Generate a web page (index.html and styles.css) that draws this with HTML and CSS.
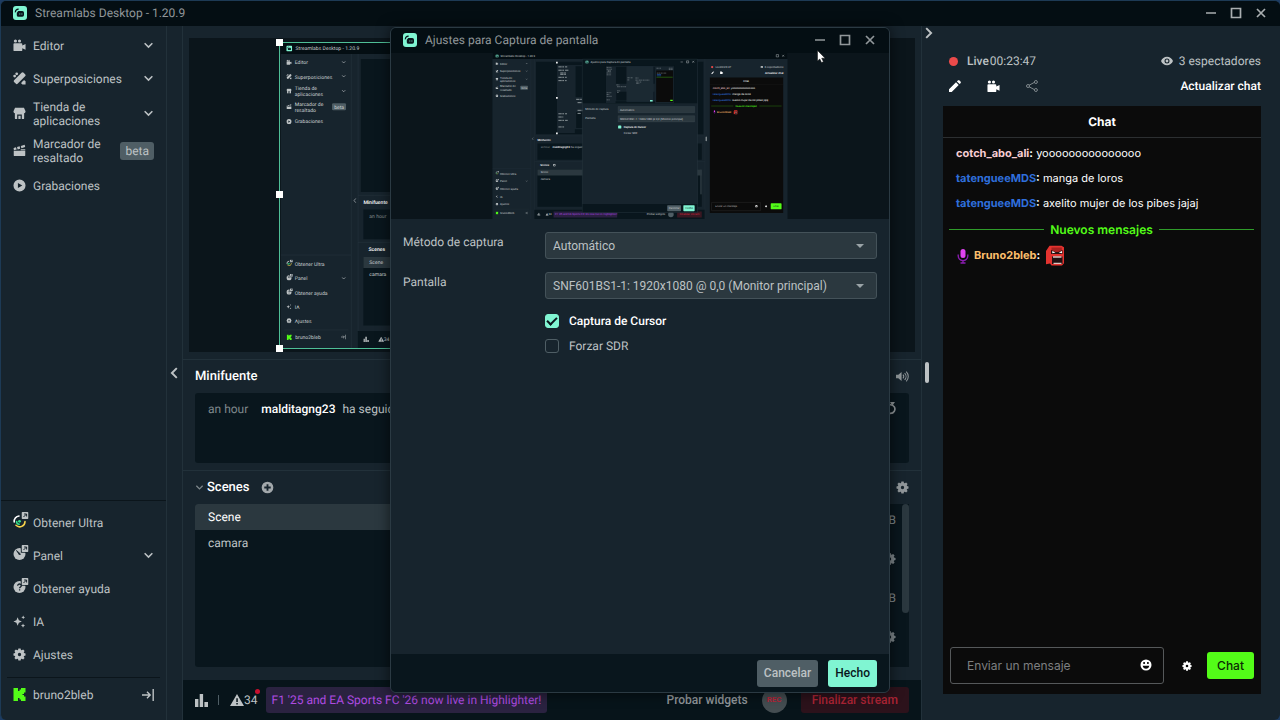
FILE: index.html
```html
<!DOCTYPE html>
<html lang="es">
<head>
    <meta charset="UTF-8">
    <meta name="viewport" content="width=device-width, initial-scale=1.0">
    <title>Streamlabs Desktop</title>
    <link rel="stylesheet" href="styles.css">
</head>
<body>
    <!-- icons -->
    <svg class="sprite" aria-hidden="true">
        <symbol id="logo" viewBox="0 0 14 14">
            <rect width="14" height="14" rx="3" fill="#80f5d2"/>
            <path d="M2.300 6C2.500 4.200 3.600 3.200 5.300 3.100" fill="none" stroke="#09161d" stroke-width="1.100" stroke-linecap="round"/>
            <path d="M3.800 6.700 5.300 5h4a1.700 1.700 0 0 1 1.700 1.700v2.400a1.700 1.700 0 0 1-1.700 1.700H5.400a1.600 1.600 0 0 1-1.600-1.600z" fill="#09161d"/>
            <path d="M6.800 7.500v1M8.900 7.500v1" stroke="#80f5d2" stroke-width=".9"/>
        </symbol>
        <symbol id="camera" viewBox="0 0 14 14">
            <circle cx="2.600" cy="2.200" r="1.700"/><circle cx="7" cy="2.200" r="1.700"/>
            <path d="M1.500 4.500h7.500a1 1 0 0 1 1 1v1.600l3.500-1.600v6L10 10v2a1 1 0 0 1-1 1H1.500a1 1 0 0 1-1-1V5.500a1 1 0 0 1 1-1z"/>
        </symbol>
        <symbol id="overlays" viewBox="0 0 14 14">
            <path d="M9.200.9a1.600 1.600 0 0 1 2.300 0l1.500 1.500a1.600 1.600 0 0 1 0 2.300L5.200 12.500a1.600 1.600 0 0 1-2.300 0l-1.500-1.500a1.600 1.600 0 0 1 0-2.300z"/>
            <path d="M9.800 10.600 12 8.600l1.500 1.500v3.400h-3.300L8.700 12z"/>
            <circle cx="4" cy="2" r="1.500"/><circle cx="1.800" cy="4.400" r="1.500"/>
        </symbol>
        <symbol id="store" viewBox="0 0 14 14">
            <path d="M2.200.8h9.600l1.700 3.700c0 1.300-.7 2-1.500 2.200V12a1 1 0 0 1-1 1H9.500V8.200h-5V13H3a1 1 0 0 1-1-1V6.700C1.200 6.500.5 5.800.5 4.500z"/>
            <path d="M5.800 9.500h2.400V13H5.800z"/>
        </symbol>
        <symbol id="clapper" viewBox="0 0 14 14">
            <path d="M.8 7.300h12.400V12a1 1 0 0 1-1 1H1.800a1 1 0 0 1-1-1zM.6 4.200l2.600-.7.800 2.500-3 .7zM4.300 3.200l2.900-.8.500 2.600-2.700.8zM8.400 2.100l4.200-1.200.5 2.400-4.100 1.400zM8.300 5.600h4.900v1H8.300z"/>
        </symbol>
        <symbol id="play" viewBox="0 0 14 14">
            <path fill-rule="evenodd" d="M7 .5a6.500 6.500 0 1 0 0 13 6.500 6.500 0 0 0 0-13zM5.300 4.200 10 7l-4.700 2.800z"/>
        </symbol>
        <symbol id="chevron" viewBox="0 0 10 10">
            <path d="M1.500 3 5 6.500 8.500 3" fill="none" stroke="currentColor" stroke-width="1.400"/>
        </symbol>
        <symbol id="external" viewBox="0 0 7 7">
            <rect width="7" height="7" rx="1" fill="#bdc2c4"/>
            <path d="M2 5 4.800 2.200M2.600 2h2.500v2.500" fill="none" stroke="#17242d"/>
        </symbol>
        <symbol id="ultra" viewBox="0 0 16 16">
            <g fill="none" stroke-width="1.600" stroke-linecap="round">
                <path d="M1.200 10A5.300 5.300 0 0 1 6 4" stroke="#fff"/>
                <path d="M3.600 9.500a2.800 2.800 0 0 0 2.600 2.800" stroke="#36e08a"/>
                <path d="M3 13.300a5.300 5.300 0 0 0 9-3.800" stroke="#f5d34a"/>
            </g>
            <circle cx="6.500" cy="9.300" r="1.400" fill="#36e08a"/>
            <use href="#external" x="8.500" y="0" width="7" height="7"/>
        </symbol>
        <symbol id="gauge" viewBox="0 0 16 16">
            <circle cx="6.500" cy="9" r="6"/>
            <path d="m3.500 5.500 4 3.500-1 1z" fill="#17242d" stroke="#17242d" stroke-width=".8"/>
            <path d="M7.800 0H16v7.700H7.800z" fill="#17242d"/>
            <use href="#external" x="8.500" y="0" width="7" height="7"/>
        </symbol>
        <symbol id="help" viewBox="0 0 16 16">
            <circle cx="6.500" cy="9" r="6"/>
            <path d="M4.700 7.700c0-2.300 3.700-2.200 3.600 0 0 1.200-1.700 1.300-1.700 2.500M6.600 11.300v1.300" fill="none" stroke="#17242d" stroke-width="1.300"/>
            <path d="M7.800 0H16v7.700H7.800z" fill="#17242d"/>
            <use href="#external" x="8.500" y="0" width="7" height="7"/>
        </symbol>
        <symbol id="sparkle" viewBox="0 0 14 14">
            <path d="m5 2.500 1.300 3.200L9.500 7 6.300 8.300 5 11.500 3.700 8.300.5 7l3.200-1.300zM11 .5l.6 1.400 1.400.6-1.400.6-.6 1.400-.6-1.400L9 2.500l1.400-.6zM10.800 9.200l.7 1.600 1.600.7-1.600.7-.7 1.600-.7-1.600-1.600-.7 1.600-.7z"/>
        </symbol>
        <symbol id="gear" viewBox="0 0 14 14">
            <path fill-rule="evenodd" d="M5.800.5h2.400l.4 1.700.8.300 1.500-.9 1.600 1.600-.9 1.500.3.800 1.600.4v2.300l-1.600.4-.3.800.9 1.500-1.600 1.600-1.500-.9-.8.300-.4 1.600H5.800l-.4-1.600-.8-.3-1.500.9-1.600-1.600.9-1.500-.3-.8L.5 8.200V5.900l1.600-.4.300-.8-.9-1.500 1.600-1.600 1.500.9.800-.3zM7 5.200a1.800 1.800 0 1 0 0 3.600 1.800 1.800 0 0 0 0-3.600z"/>
        </symbol>
        <symbol id="kick" viewBox="0 0 12 13">
            <path fill="#53fc18" d="M0 0h4.500v3H6V1.500h1.500V0H12v4.500h-1.500V6H9v1h1.500v1.500H12V13H7.500v-1.500H6V10H4.500v3H0z"/>
        </symbol>
        <symbol id="logout" viewBox="0 0 12 12">
            <path d="M0 6h8M5 2.800 8.200 6 5 9.200M11.200 0v12" fill="none" stroke="currentColor" stroke-width="1.400"/>
        </symbol>
        <symbol id="minimize" viewBox="0 0 12 12"><path d="M1 6h10" stroke="currentColor" stroke-width="1.500"/></symbol>
        <symbol id="maximize" viewBox="0 0 12 12"><path d="M1.500 1.500h9v9h-9z" fill="none" stroke="currentColor" stroke-width="1.700"/></symbol>
        <symbol id="close" viewBox="0 0 12 12"><path d="m2 2 8 8m0-8-8 8" stroke="currentColor" stroke-width="1.700"/></symbol>
        <symbol id="plus" viewBox="0 0 14 14">
            <path fill-rule="evenodd" d="M7 .7a6.300 6.300 0 1 0 0 12.600A6.300 6.300 0 0 0 7 .7zM6 3.500h2v2.500h2.500v2H8v2.500H6V8H3.500V6H6z"/>
        </symbol>
        <symbol id="volume" viewBox="0 0 14 12">
            <path d="M0 4h2.500L6 1.200v9.600L2.500 8H0z"/>
            <path d="M7.500 4a3 3 0 0 1 0 4M9.300 2.300a5.300 5.300 0 0 1 0 7.400M11 .7a7.500 7.500 0 0 1 0 10.600" fill="none" stroke="currentColor" stroke-width="1.100"/>
        </symbol>
        <symbol id="undo" viewBox="0 0 12 12">
            <path d="M3 2.500h4a4 4 0 1 1-3.500 6" fill="none" stroke="currentColor" stroke-width="1.500"/>
            <path d="M6.500 0H11L8.500 3.800z"/>
        </symbol>
        <symbol id="bars" viewBox="0 0 13 13"><path d="M0 5h3.400v8H0zM4.700 0h3.400v13H4.700zM9.400 8H13v5H9.400z"/></symbol>
        <symbol id="warning" viewBox="0 0 14 12">
            <path fill-rule="evenodd" d="M7 0l7 12H0zM6.300 4.200v3.800h1.500V4.200zm0 4.800v1.500h1.500V9z"/>
        </symbol>
        <symbol id="eye" viewBox="0 0 12 10">
            <path fill-rule="evenodd" d="M6 .8C3.300.8 1 2.500 0 5c1 2.500 3.300 4.200 6 4.200S11 7.500 12 5C11 2.500 8.700.8 6 .8zM6 2.500a2.500 2.500 0 1 1 0 5 2.500 2.500 0 0 1 0-5z"/>
            <circle cx="6" cy="5" r="1.400"/>
        </symbol>
        <symbol id="pencil" viewBox="0 0 12 12">
            <path d="M0 9.300 7 2.300 9.700 5l-7 7H0zM7.900 1.400 8.800.5c.5-.5 1.200-.5 1.700 0l1 1c.5.500.5 1.200 0 1.700l-.9.900z"/>
        </symbol>
        <symbol id="share" viewBox="0 0 12 12">
            <path d="m3 5.300 5.500-3M3 6.700l5.500 3" stroke="currentColor"/>
            <g fill="none" stroke="currentColor"><circle cx="2" cy="6" r="1.500"/><circle cx="9.900" cy="2" r="1.500"/><circle cx="9.900" cy="10" r="1.500"/></g>
        </symbol>
        <symbol id="mic" viewBox="0 0 12 16">
            <rect x="3.500" y="1" width="5" height="9" rx="2.500" fill="#e043f0"/>
            <path d="M1.200 6.500v1.300a4.800 4.800 0 0 0 9.600 0V6.500M6 12.500V15M3.500 15h5" fill="none" stroke="#8a1cb0" stroke-width="1.400"/>
        </symbol>
        <symbol id="emote" viewBox="0 0 20 21">
            <path d="M4.500.8H16.500l2.500 1.500v16L17 20.500H6.500L5 18.500 1 19.200V6z" fill="#e3332f"/>
            <path d="M6.500 2.500h10.300v4.700H6.500z" fill="#a8211f"/>
            <path d="M6 5l4.500 2h3l4-2v4h-11.500z" fill="#2b1212"/>
            <path d="M7.300 6 10.500 7.600 7.300 8.200zM17 6l-3.200 1.600 3.200.6z" fill="#fff"/>
            <path d="M7 11.500h10.500v7.500H7z" fill="#211012"/>
            <path d="M8 11.300h8.500v1.500H8zM8.500 17.800h8V19h-8z" fill="#dcc6c2"/>
        </symbol>
        <symbol id="smile" viewBox="0 0 12 12">
            <path fill-rule="evenodd" d="M6 .5a5.500 5.500 0 1 0 0 11 5.500 5.500 0 0 0 0-11zM3.300 3h1.600v2H3.300zM7.100 3h1.600v2H7.100zM2.700 6.700h6.600C9 8.700 7.700 9.700 6 9.700S3 8.700 2.700 6.700z"/>
        </symbol>
        <symbol id="arrow" viewBox="0 0 8 4"><path d="M0 0h8L4 4z"/></symbol>

        <!-- innermost capture, too small for text -->
        <symbol id="capture-small" viewBox="0 0 1280 720" preserveAspectRatio="none">
            <path fill="#17242d" d="M0 0h1280v720H0z"/>
            <path fill="#09161d" d="M0 0h1280v26H0zM189 38h726v314H189zM195 505h713v162H195zM182 680h739v40H182z"/>
            <path fill="#1b2932" stroke="#34444c" stroke-width="3" d="M390 27h499v665H390z"/>
            <path fill="#0b0b0b" d="M943 106h318v588H943z"/>
            <path stroke="#9aa3a7" stroke-width="9" stroke-dasharray="34 6 18 10" d="M14 45h90M14 79h105M33 107h60M33 121h65M14 151h85M14 185h84M14 522h88M14 555h50M14 589h95M14 656h60M195 375h65M209 409h170M209 487h70M209 518h32M403 241h98M403 281h43M553 245h60M553 285h265M569 321h94M569 346h58M949 61h86M1180 61h80M1180 86h80M956 153h180"/>
            <path stroke="#246cd8" stroke-width="10" d="M956 179h80M956 203h80"/>
            <path stroke="#53fc18" stroke-width="6" d="M949 230h304"/>
            <path fill="#80f5d2" d="M828 660h49v26h-49z"/>
            <path fill="#53fc18" d="M1207 652h47v26h-47z"/>
        </symbol>
    </svg>

    <div class="app">
        <header class="titlebar">
            <svg class="logo"><use href="#logo"/></svg>
            <span class="titlebar-text">Streamlabs Desktop - 1.20.9</span>
            <div class="window-buttons">
                <button aria-label="Minimizar"><svg><use href="#minimize"/></svg></button>
                <button aria-label="Maximizar"><svg><use href="#maximize"/></svg></button>
                <button aria-label="Cerrar"><svg><use href="#close"/></svg></button>
            </div>
        </header>

        <div class="columns">
            <nav class="sidenav">
                <div class="nav-group">
                    <a class="nav-item" href="#"><svg class="icon"><use href="#camera"/></svg><span>Editor</span><svg class="chevron"><use href="#chevron"/></svg></a>
                    <a class="nav-item" href="#"><svg class="icon"><use href="#overlays"/></svg><span>Superposiciones</span><svg class="chevron"><use href="#chevron"/></svg></a>
                    <a class="nav-item tall" href="#"><svg class="icon"><use href="#store"/></svg><span>Tienda de aplicaciones</span><svg class="chevron"><use href="#chevron"/></svg></a>
                    <a class="nav-item tall" href="#"><svg class="icon"><use href="#clapper"/></svg><span>Marcador de resaltado</span><b class="beta">beta</b></a>
                    <a class="nav-item" href="#"><svg class="icon"><use href="#play"/></svg><span>Grabaciones</span></a>
                </div>
                <div class="nav-group nav-bottom">
                    <a class="nav-item" href="#"><svg class="icon linked"><use href="#ultra"/></svg><span>Obtener Ultra</span></a>
                    <a class="nav-item" href="#"><svg class="icon linked"><use href="#gauge"/></svg><span>Panel</span><svg class="chevron"><use href="#chevron"/></svg></a>
                    <a class="nav-item" href="#"><svg class="icon linked"><use href="#help"/></svg><span>Obtener ayuda</span></a>
                    <a class="nav-item" href="#"><svg class="icon"><use href="#sparkle"/></svg><span>IA</span></a>
                    <a class="nav-item" href="#"><svg class="icon"><use href="#gear"/></svg><span>Ajustes</span></a>
                </div>
                <a class="nav-user" href="#"><svg class="icon"><use href="#kick"/></svg><span>bruno2bleb</span><svg class="logout"><use href="#logout"/></svg></a>
            </nav>

            <button class="collapse" aria-label="Contraer menú"><svg><use href="#chevron"/></svg></button>

            <main class="studio">
                <section class="canvas-area">
                    <div class="canvas">
                        <div class="source">
                            <svg class="source-image" viewBox="0 0 1280 720"><use href="#capture"/></svg>
                            <i class="handle top"></i>
                            <i class="handle middle"></i>
                            <i class="handle bottom"></i>
                        </div>
                    </div>
                </section>

                <section class="feed">
                    <div class="section-head">
                        <h2>Minifuente</h2>
                        <button class="icon-button" aria-label="Sonido"><svg><use href="#volume"/></svg></button>
                    </div>
                    <div class="feed-list">
                        <span class="feed-time">an hour</span>
                        <strong>malditagng23</strong>
                        <span>ha seguid</span>
                        <button class="icon-button replay" aria-label="Repetir"><svg><use href="#undo"/></svg></button>
                    </div>
                </section>

                <section class="mixer-row">
                    <div class="section-head">
                        <svg class="fold"><use href="#chevron"/></svg>
                        <h2>Scenes</h2>
                        <button class="icon-button add" aria-label="Añadir escena"><svg><use href="#plus"/></svg></button>
                        <button class="icon-button" aria-label="Ajustes de audio"><svg><use href="#gear"/></svg></button>
                    </div>
                    <div class="panels">
                        <ul class="scene-list">
                            <li class="active">Scene</li>
                            <li>camara</li>
                        </ul>
                        <div class="mixer">
                            <div class="channels">
                                <span>B</span><svg><use href="#gear"/></svg>
                                <span>B</span><svg><use href="#gear"/></svg>
                            </div>
                            <div class="scrollbar"></div>
                        </div>
                    </div>
                </section>

                <footer class="statusbar">
                    <svg class="bars"><use href="#bars"/></svg>
                    <i class="separator"></i>
                    <span class="alerts"><svg><use href="#warning"/></svg>34</span>
                    <a class="news" href="#">F1 '25 and EA Sports FC '26 now live in Highlighter!</a>
                    <button class="plain">Probar widgets</button>
                    <button class="rec">REC</button>
                    <button class="end-stream">Finalizar stream</button>
                </footer>
            </main>

            <aside class="live">
                <button class="expand" aria-label="Contraer chat"><svg><use href="#chevron"/></svg></button>
                <i class="drag"></i>
                <div class="live-row">
                    <i class="live-dot"></i>
                    <span><b>Live</b> 00:23:47</span>
                    <span class="viewers"><svg><use href="#eye"/></svg>3 espectadores</span>
                </div>
                <div class="live-row tools">
                    <button aria-label="Editar"><svg><use href="#pencil"/></svg></button>
                    <button aria-label="Cámara"><svg class="big"><use href="#camera"/></svg></button>
                    <button class="dim" aria-label="Compartir"><svg><use href="#share"/></svg></button>
                    <a class="refresh" href="#">Actualizar chat</a>
                </div>
                <div class="chat">
                    <h3>Chat</h3>
                    <div class="messages">
                        <p><b class="pink">cotch_abo_ali</b><b>:</b> yooooooooooooooo</p>
                        <p><b class="blue">tatengueeMDS</b><b>:</b> manga de loros</p>
                        <p><b class="blue">tatengueeMDS</b><b>:</b> axelito mujer de los pibes jajaj</p>
                    </div>
                    <div class="new-messages">Nuevos mensajes</div>
                    <p class="last"><svg class="mic"><use href="#mic"/></svg><b class="orange">Bruno2bleb</b><b>:</b><svg class="emote"><use href="#emote"/></svg></p>
                    <form class="chat-form">
                        <div class="chat-input">
                            <input type="text" placeholder="Enviar un mensaje" aria-label="Enviar un mensaje">
                            <button type="button" aria-label="Emoticonos"><svg><use href="#smile"/></svg></button>
                        </div>
                        <button type="button" class="chat-gear" aria-label="Ajustes del chat"><svg><use href="#gear"/></svg></button>
                        <button type="button" class="send">Chat</button>
                    </form>
                </div>
            </aside>
        </div>
    </div>

    <div class="dialog" role="dialog" aria-labelledby="dialogTitle">
        <header class="titlebar">
            <svg class="logo"><use href="#logo"/></svg>
            <span class="titlebar-text" id="dialogTitle">Ajustes para Captura de pantalla</span>
            <div class="window-buttons">
                <button aria-label="Minimizar"><svg><use href="#minimize"/></svg></button>
                <button aria-label="Maximizar"><svg><use href="#maximize"/></svg></button>
                <button aria-label="Cerrar"><svg><use href="#close"/></svg></button>
            </div>
        </header>
        <div class="preview">
            <!-- capture of the whole desktop, also shown on the canvas -->
            <svg viewBox="0 0 1280 720">
                <g id="capture">
                    <path fill="#17242d" d="M0 0h1280v720H0z"/>
                    <path fill="#040e13" d="M0 0h1280v26H0z"/>
                    <path fill="#09161d" d="M189 38h726v314H189zM195 393h713v70H195zM195 505h713v162H195zM182 680h739v40H182z"/>
                    <path fill="#2b383f" d="M195 505h713v26H195z"/>
                    <path stroke="#2b3a43" d="M166.500 26v694M182.500 26v654M921.500 26v694M182 359.500h739M182 470.500h739M0 500.500h166M8 677.500h152"/>
                    <g fill="#bdc2c4" color="#bdc2c4">
                        <use href="#logo" x="13" y="6" width="14" height="14"/>
                        <use href="#camera" x="13" y="39" width="13" height="13"/>
                        <use href="#overlays" x="13" y="73" width="13" height="13"/>
                        <use href="#store" x="13" y="107" width="13" height="13"/>
                        <use href="#clapper" x="13" y="144" width="13" height="13"/>
                        <use href="#play" x="13" y="179" width="13" height="13"/>
                        <use href="#chevron" x="143" y="40" width="11" height="11"/>
                        <use href="#chevron" x="143" y="73" width="11" height="11"/>
                        <use href="#chevron" x="143" y="108" width="11" height="11"/>
                        <use href="#chevron" x="143" y="550" width="11" height="11"/>
                        <use href="#ultra" x="13" y="511" width="16" height="16"/>
                        <use href="#gauge" x="13" y="545" width="16" height="16"/>
                        <use href="#help" x="13" y="579" width="16" height="16"/>
                        <use href="#sparkle" x="13" y="616" width="13" height="13"/>
                        <use href="#gear" x="13" y="649" width="13" height="13"/>
                        <use href="#kick" x="14" y="688" width="12" height="13"/>
                        <use href="#logout" x="142" y="688" width="12" height="12"/>
                        <use href="#plus" x="262" y="480" width="13" height="13"/>
                        <use href="#bars" x="195" y="693" width="13" height="13"/>
                        <use href="#warning" x="230" y="693" width="14" height="13"/>
                        <rect x="121" y="142" width="33" height="17" rx="3" fill="#4f5e65"/>
                        <path d="m177 367-4 5 4 5" fill="none" stroke="currentColor" stroke-width="1.500"/>
                    </g>
                    <g class="capture-text">
                        <text x="35" y="17">Streamlabs Desktop - 1.20.9</text>
                        <text x="33" y="50">Editor</text>
                        <text x="33" y="84">Superposiciones</text>
                        <text x="33" y="111">Tienda de</text>
                        <text x="33" y="126">aplicaciones</text>
                        <text x="33" y="148">Marcador de</text>
                        <text x="33" y="163">resaltado</text>
                        <text x="126" y="155">beta</text>
                        <text x="33" y="190">Grabaciones</text>
                        <text x="33" y="527">Obtener Ultra</text>
                        <text x="33" y="560">Panel</text>
                        <text x="33" y="594">Obtener ayuda</text>
                        <text x="33" y="627">IA</text>
                        <text x="33" y="661">Ajustes</text>
                        <text x="34" y="699">bruno2bleb</text>
                        <text class="strong" x="195" y="380">Minifuente</text>
                        <text x="209" y="414" opacity=".6">an hour</text>
                        <text class="strong" x="261" y="414">malditagng23</text>
                        <text x="340" y="414">ha seguid</text>
                        <text class="strong" x="207" y="492">Scenes</text>
                        <text x="209" y="522">Scene</text>
                        <text x="209" y="549">camara</text>
                        <text x="243" y="704">34</text>
                    </g>
                    <path fill="#2b1f42" d="M265 687h276v26H265z"/>
                    <text class="capture-text purple" x="271" y="704">F1 '25 and EA Sports FC '26 now live in Highlighter!</text>
                    <use href="#capture-small" x="280" y="41" width="546" height="307"/>
                    <path fill="#fff" d="M276 38h7v7h-7zM276 191h7v7h-7zM276 345h7v7h-7z"/>
                    <path fill="#3a1822" d="M801 687h107v26H801z"/>
                    <text class="capture-text red" x="812" y="704">Finalizar stream</text>
                    <text class="capture-text" x="669" y="704">Probar widgets</text>
                    <circle cx="774" cy="700" r="12" fill="#4f5e65"/>
                    <rect x="901" y="505" width="7" height="109" rx="3" fill="#2b383f"/>
                    <rect x="925" y="362" width="4" height="21" rx="2" fill="#bdc2c4"/>

                    <path fill="#17242d" stroke="#2b3a43" stroke-width="2" d="M390 27h499v665H390z"/>
                    <path fill="#09161d" d="M391 28h497v190H391zM391 655h497v36H391z"/>
                    <use href="#logo" x="403" y="32" width="14" height="14"/>
                    <use href="#capture-small" x="492" y="52" width="296" height="166"/>
                    <path fill="#2b383f" stroke="#4f5e65" d="M545 232h332v27H545zM545 272h332v27H545z"/>
                    <rect x="545" y="314" width="14" height="14" rx="3" fill="#80f5d2"/>
                    <rect x="758" y="660" width="60" height="26" rx="3" fill="#4f5e65"/>
                    <rect x="828" y="660" width="49" height="26" rx="3" fill="#80f5d2"/>
                    <path fill="none" stroke="#bdc2c4" stroke-width="2" d="M816 39h10M842 34h9v9h-9zM867 34l8 8m0-8-8 8M1231 7h10v10h-10zM1257 8l8 8m0-8-8 8"/>
                    <g class="capture-text">
                        <text x="425" y="44">Ajustes para Captura de pantalla</text>
                        <text x="403" y="246">Método de captura</text>
                        <text x="403" y="286">Pantalla</text>
                        <text x="553" y="250">Automático</text>
                        <text x="553" y="290">SNF601BS1-1: 1920x1080 @ 0,0 (Monitor principal)</text>
                        <text class="strong" x="569" y="326">Captura de Cursor</text>
                        <text x="569" y="351">Forzar SDR</text>
                        <text x="765" y="678">Cancelar</text>
                        <text class="dark" x="836" y="678">Hecho</text>
                        <text x="967" y="66">Live00:23:47</text>
                        <text x="1180" y="66">3 espectadores</text>
                        <text class="strong" x="1182" y="91">Actualizar chat</text>
                    </g>
                    <circle cx="953" cy="61" r="5" fill="#eb4a4a"/>
                    <g fill="#fff">
                        <use href="#eye" x="1162" y="56" width="12" height="10"/>
                        <use href="#pencil" x="949" y="79" width="13" height="13"/>
                        <use href="#camera" x="987" y="78" width="14" height="14"/>
                    </g>
                    <path fill="#0b0b0b" d="M943 106h318v588H943z"/>
                    <path stroke="#2e2e2e" d="M943 137.500h318"/>
                    <path stroke="#53fc18" d="M949 230h96M1158 230h96"/>
                    <rect x="950" y="648" width="213" height="36" rx="3" fill="none" stroke="#555"/>
                    <rect x="1207" y="652" width="47" height="26" rx="3" fill="#53fc18"/>
                    <use href="#mic" x="957" y="247" width="12" height="16"/>
                    <use href="#emote" x="1045" y="247" width="19" height="20"/>
                    <g fill="#fff">
                        <use href="#smile" x="1139" y="659" width="12" height="12"/>
                        <use href="#gear" x="1182" y="660" width="10" height="10"/>
                    </g>
                    <g class="capture-text chat-text">
                        <text class="strong" x="1088" y="126">Chat</text>
                        <text x="956" y="158"><tspan class="strong pink">cotch_abo_ali:</tspan> yooooooooooooooo</text>
                        <text x="956" y="183"><tspan class="strong blue">tatengueeMDS:</tspan> manga de loros</text>
                        <text x="956" y="208"><tspan class="strong blue">tatengueeMDS:</tspan> axelito mujer de los pibes jajaj</text>
                        <text class="strong green" x="1054" y="234">Nuevos mensajes</text>
                        <text class="strong orange" x="974" y="260">Bruno2bleb:</text>
                        <text x="966" y="669" opacity=".6">Enviar un mensaje</text>
                        <text class="dark" x="1218" y="669">Chat</text>
                    </g>
                </g>
            </svg>
        </div>
        <form class="settings">
            <label for="method">Método de captura</label>
            <div class="select">
                <select id="method"><option>Automático</option></select>
                <svg><use href="#arrow"/></svg>
            </div>
            <label for="screen">Pantalla</label>
            <div class="select">
                <select id="screen"><option>SNF601BS1-1: 1920x1080 @ 0,0 (Monitor principal)</option></select>
                <svg><use href="#arrow"/></svg>
            </div>
            <div class="checks">
                <label><input type="checkbox" checked>Captura de Cursor</label>
                <label><input type="checkbox">Forzar SDR</label>
            </div>
        </form>
        <footer class="dialog-footer">
            <button class="cancel">Cancelar</button>
            <button class="done">Hecho</button>
        </footer>
    </div>

    <svg class="pointer" viewBox="0 0 9 13"><path d="M.5.5v10.500l2.300-2 1.700 3.600 1.900-.9-1.700-3.500h3.400z" fill="#fff" stroke="#111" stroke-width=".5"/></svg>
</body>
</html>
```

FILE: styles.css
```css
* {
    box-sizing: border-box;
}
body {
    margin: 0;
    height: 100vh;
    overflow: hidden;
    position: relative;
    background: #1d3c63;
    color: #bdc2c4;
    font-family: Roboto, "Liberation Sans", sans-serif;
    font-size: 12px;
    line-height: 14px;
    text-rendering: geometricPrecision;
}
.sprite {
    position: absolute;
    width: 0;
    height: 0;
}
svg {
    display: block;
    flex: none;
    fill: currentColor;
}
button {
    font: inherit;
    color: inherit;
    background: none;
    border: 0;
    padding: 0;
}
a {
    color: inherit;
    text-decoration: none;
}
h2, h3, p, ul {
    margin: 0;
    padding: 0;
}

/* window */
.app {
    height: 100vh;
    display: flex;
    flex-direction: column;
    background: #17242d;
    border: 1px solid #1d3a55;
    border-width: 1px 0 0 1px;
    border-radius: 6px;
    overflow: hidden;
}
.titlebar {
    flex: none;
    display: flex;
    align-items: center;
    height: 25px;
    padding: 0 13px 2px 12px;
    background: #040e13;
    color: #91979a;
}
.logo {
    width: 14px;
    height: 14px;
    margin-right: 8px;
}
.window-buttons {
    display: flex;
    gap: 13px;
    margin-left: auto;
}
.window-buttons svg {
    width: 12px;
    height: 12px;
}
.app > .titlebar .window-buttons {
    color: #a9aeb0;
}
.columns {
    flex: 1;
    display: flex;
    min-height: 0;
}

/* side navigation */
.sidenav {
    flex: none;
    display: flex;
    flex-direction: column;
    width: 166px;
    padding-top: 3px;
    border-right: 1px solid #22313a;
}
.nav-item {
    display: flex;
    align-items: center;
    height: 33px;
    padding: 0 12px;
}
.nav-item.tall {
    height: 37px;
}
.nav-item span {
    flex: 1;
    min-width: 0;
}
.icon {
    width: 13px;
    height: 13px;
    margin-right: 7px;
}
.icon.linked {
    width: 16px;
    height: 16px;
    margin-right: 4px;
    margin-bottom: 5px;
}
.chevron {
    width: 11px;
    height: 11px;
}
.beta {
    padding: 2px 5px;
    border-radius: 3px;
    background: #4f5e65;
    font-weight: 400;
}
.nav-bottom {
    margin-top: auto;
    padding: 5px 0 6px;
    border-top: 1px solid #0b151b;
}
.nav-user {
    display: flex;
    align-items: center;
    height: 43px;
    margin: 0 6px;
    padding: 0 6px 9px;
    border-top: 1px solid #0b151b;
}
.logout {
    width: 12px;
    height: 12px;
    margin-left: auto;
}
.collapse {
    flex: none;
    width: 15px;
}
.collapse svg {
    width: 14px;
    height: 14px;
    transform: rotate(90deg);
}

/* editor */
.studio {
    flex: 1;
    min-width: 0;
    display: flex;
    flex-direction: column;
    border: 1px solid #22313a;
    border-width: 0 1px;
}
.canvas-area {
    padding: 12px 6px 7px;
    border-bottom: 1px solid #22313a;
}
.canvas {
    display: flex;
    align-items: center;
    justify-content: center;
    height: 314px;
    background: #0b151b;
}
.source {
    position: relative;
    height: 307px;
    aspect-ratio: 16 / 9;
    border: 1px solid #4fbf97;
}
.source-image {
    width: 100%;
    height: 100%;
}
.handle {
    position: absolute;
    left: -4px;
    width: 7px;
    height: 7px;
    background: #fff;
}
.handle.top {
    top: -4px;
}
.handle.middle {
    top: calc(50% - 4px);
}
.handle.bottom {
    bottom: -4px;
}
.section-head {
    display: flex;
    align-items: center;
    height: 33px;
}
h2 {
    color: #fff;
    font-size: 13px;
    font-weight: 500;
}
.icon-button {
    margin-left: auto;
    color: #91979a;
}
.icon-button svg {
    width: 13px;
    height: 13px;
}
.feed {
    padding: 0 12px 7px;
    border-bottom: 1px solid #22313a;
}
.feed-list {
    display: flex;
    align-items: flex-start;
    height: 70px;
    padding: 9px 13px;
    background: #09161d;
    border-radius: 3px;
}
.feed-list strong {
    margin: 0 7px 0 13px;
    color: #fff;
    font-weight: 500;
}
.feed-time {
    color: #7f888c;
}
.mixer-row {
    flex: 1;
    display: flex;
    flex-direction: column;
    min-height: 0;
    padding: 0 12px 13px;
}
.fold {
    width: 9px;
    height: 9px;
    margin-right: 3px;
    color: #7f888c;
}
.add {
    margin-left: 11px;
    color: #a2a8ab;
}
.panels {
    flex: 1;
    display: grid;
    grid-template-columns: 1fr 1fr;
    gap: 12px;
}
.scene-list {
    list-style: none;
    background: #09161d;
    border-radius: 3px;
}
.scene-list li {
    padding: 6px 13px;
}
.scene-list .active {
    background: #2b383f;
    color: #fff;
    border-radius: 3px 3px 0 0;
}
.mixer {
    display: flex;
    background: #09161d;
}
.channels {
    flex: 1;
    display: flex;
    flex-direction: column;
    align-items: flex-end;
    gap: 25px;
    padding: 9px 6px 0 0;
    color: #7f888c;
}
.channels svg {
    width: 13px;
    height: 14px;
}
.scrollbar {
    width: 7px;
    height: 109px;
    border-radius: 4px;
    background: #2b383f;
}
.statusbar {
    flex: none;
    display: flex;
    align-items: center;
    height: 40px;
    padding: 0 12px;
    background: #07141a;
}
.bars {
    width: 13px;
    height: 13px;
}
.separator {
    width: 1px;
    height: 10px;
    margin: 0 11px 0 10px;
    background: #4f5e65;
}
.alerts {
    position: relative;
    display: flex;
    align-items: center;
}
.alerts svg {
    width: 14px;
    height: 12px;
}
.alerts::after {
    content: "";
    position: absolute;
    top: -4px;
    right: -2px;
    width: 5px;
    height: 5px;
    border-radius: 50%;
    background: #c8102e;
}
.news {
    margin: 0 auto 0 8px;
    padding: 6px;
    border-radius: 3px;
    background: #2a2240;
    color: #ae4be0;
}
.plain {
    color: #91979a;
    font-weight: 500;
}
.rec {
    width: 25px;
    height: 25px;
    margin: 0 14px;
    border-radius: 50%;
    background: #444d51;
    color: #b8263a;
    font-size: 8px;
    font-weight: 700;
}
.end-stream {
    padding: 6px 11px;
    border-radius: 3px;
    background: #2c121b;
    color: #ad2435;
    font-weight: 500;
}

/* live chat column */
.live {
    flex: none;
    position: relative;
    display: flex;
    flex-direction: column;
    width: 358px;
    padding: 28px 19px 26px 21px;
}
.expand {
    position: absolute;
    top: 0;
    left: 0;
}
.expand svg {
    width: 14px;
    height: 14px;
    transform: rotate(-90deg);
}
.drag {
    position: absolute;
    top: calc(50% - 11px);
    left: 3px;
    width: 4px;
    height: 21px;
    border-radius: 2px;
    background: #bdc2c4;
}
.live-row {
    display: flex;
    align-items: center;
    height: 14px;
    padding-left: 6px;
}
.live-row b {
    margin-right: -2px;
    font-weight: 500;
}
.live-dot {
    width: 9px;
    height: 9px;
    margin-right: 9px;
    border-radius: 50%;
    background: #eb4a4a;
}
.viewers {
    display: flex;
    align-items: center;
    gap: 6px;
    margin-left: auto;
}
.viewers svg {
    width: 12px;
    height: 10px;
}
.tools {
    gap: 26px;
    margin: 11px 0 13px;
    color: #fff;
}
.tools svg {
    width: 12px;
    height: 12px;
}
.tools .big {
    width: 13px;
    height: 13px;
}
.dim {
    color: #7f888c;
}
.refresh {
    margin-left: auto;
    font-weight: 500;
}
.chat {
    flex: 1;
    display: flex;
    flex-direction: column;
    background: #0b0b0b;
    color: #fff;
    font-family: Inter, "Liberation Sans", sans-serif;
    font-size: 11px;
    line-height: 15px;
}
h3 {
    padding: 8px 0;
    border-bottom: 1px solid #2c2f31;
    font-size: 12px;
    font-weight: 700;
    text-align: center;
}
.messages {
    display: flex;
    flex-direction: column;
    gap: 10px;
    padding: 8px 13px;
}
.messages b, .last b {
    font-weight: 700;
}
.pink {
    color: #f6cdd3;
}
.blue {
    color: #2f6fdc;
}
.orange {
    color: #fdbf6b;
}
.new-messages {
    display: flex;
    align-items: center;
    gap: 6px;
    padding: 3px 7px 0 6px;
    color: #53fc18;
    font-size: 12px;
    font-weight: 600;
}
.new-messages::before, .new-messages::after {
    content: "";
    flex: 1;
    height: 1px;
    background: #2f9c2a;
}
.last {
    display: flex;
    align-items: center;
    padding: 8px 14px;
}
.mic {
    width: 12px;
    height: 16px;
    margin-right: 5px;
}
.emote {
    width: 20px;
    height: 21px;
    margin-left: 5px;
}
.chat-form {
    display: flex;
    align-items: center;
    margin-top: auto;
    padding: 0 7px 10px;
}
.chat-input {
    flex: 1;
    position: relative;
}
.chat-input input {
    display: block;
    width: 100%;
    height: 37px;
    padding: 0 32px 0 16px;
    border: 1px solid #55585a;
    border-radius: 3px;
    background: none;
    color: #fff;
    font: inherit;
    font-size: 12px;
}
.chat-input input::placeholder {
    color: #7d7f80;
}
.chat-input button {
    position: absolute;
    top: 12px;
    right: 12px;
}
.chat-input svg {
    width: 12px;
    height: 12px;
}
.chat-gear {
    margin: 0 15px 0 18px;
}
.chat-gear svg {
    width: 10px;
    height: 10px;
}
.send {
    height: 27px;
    padding: 0 10px;
    border-radius: 3px;
    background: #53fc18;
    color: #0b2a05;
    font-size: 12px;
    font-weight: 500;
}

/* source settings window */
.dialog {
    position: absolute;
    top: 27px;
    bottom: 27px;
    left: 390px;
    width: 500px;
    display: flex;
    flex-direction: column;
    background: #17242d;
    border: 1px solid #2b3a43;
    border-radius: 6px;
    box-shadow: 0 0 14px rgba(0, 0, 0, 0.6);
    overflow: hidden;
}
.preview {
    height: 166px;
    background: #0b151b;
}
.preview svg {
    width: 296px;
    height: 166px;
    margin: 0 auto;
}
.settings {
    flex: 1;
    display: grid;
    grid-template-columns: 142px 1fr;
    align-content: start;
    row-gap: 13px;
    padding: 13px 12px;
}
.settings > label {
    padding-top: 3px;
}
.select {
    position: relative;
}
.select select {
    display: block;
    appearance: none;
    width: 100%;
    height: 27px;
    padding: 0 26px 0 7px;
    border: 1px solid #445259;
    border-radius: 3px;
    background: #2b383f;
    color: inherit;
    font: inherit;
}
.select svg {
    position: absolute;
    top: 12px;
    right: 13px;
    width: 8px;
    height: 4px;
    color: #9aa3a7;
}
.checks {
    grid-column: 2;
    display: grid;
    gap: 11px;
    padding-top: 2px;
}
.checks label {
    display: flex;
    align-items: center;
    gap: 10px;
}
.checks label:first-child {
    color: #fff;
    font-weight: 500;
}
.checks input {
    appearance: none;
    width: 14px;
    height: 14px;
    margin: 0;
    border: 1px solid #4f5e65;
    border-radius: 3px;
}
.checks input:checked {
    display: flex;
    justify-content: center;
    border-color: #80f5d2;
    background: #80f5d2;
}
.checks input:checked::after {
    content: "";
    width: 4px;
    height: 8px;
    border: solid #09161d;
    border-width: 0 2px 2px 0;
    transform: rotate(45deg);
}
.dialog-footer {
    display: flex;
    align-items: center;
    justify-content: flex-end;
    gap: 10px;
    height: 38px;
    padding: 0 12px;
    background: #09161d;
}
.dialog-footer button {
    height: 27px;
    padding: 0 7px;
    border-radius: 3px;
    font-weight: 500;
}
.cancel {
    background: #4f5e65;
}
.dialog-footer .done {
    background: #80f5d2;
    color: #09161d;
}
.pointer {
    position: absolute;
    top: 50px;
    left: 817px;
    width: 9px;
    height: 13px;
}

/* text inside the captured picture */
.capture-text {
    fill: #c8cdcf;
    font-size: 12px;
}
.chat-text {
    fill: #fff;
    font-family: Inter, "Liberation Sans", sans-serif;
    font-size: 11px;
}
.capture-text .strong {
    fill: #fff;
    font-weight: 500;
}
.capture-text .dark {
    fill: #09161d;
}
.capture-text .pink {
    fill: #f6cdd3;
}
.capture-text .blue {
    fill: #2f6fdc;
}
.capture-text .green {
    fill: #53fc18;
}
.capture-text .orange {
    fill: #fdbf6b;
}
.capture-text.purple {
    fill: #ae4be0;
}
.capture-text.red {
    fill: #d02c40;
}
```
